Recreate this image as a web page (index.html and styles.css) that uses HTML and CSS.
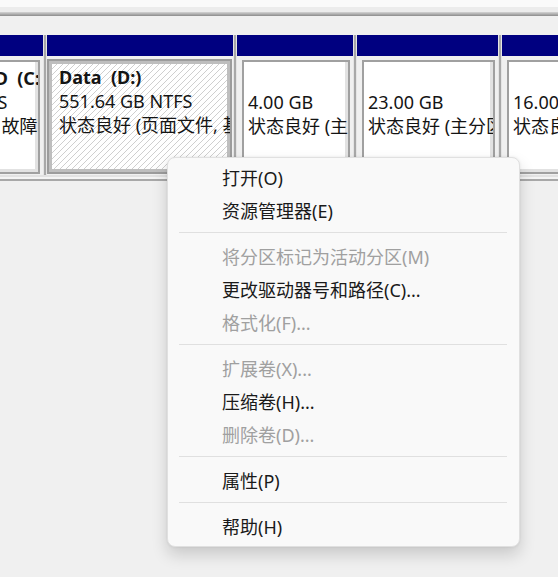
FILE: index.html
```html
<!DOCTYPE html>
<html lang="zh-CN">
<head>
<meta charset="utf-8">
<title>磁盘管理</title>
<link rel="stylesheet" href="styles.css">
</head>
<body>
<div class="screen">
  <div class="top">
    <div class="top-a"></div>
    <div class="top-b"></div>
    <div class="top-line"></div>
    <div class="top-c"></div>
  </div>
  <div class="row">
    <div class="col col-1">
      <div class="head"></div>
      <div class="box box-shift">
        <div class="lines">
          <div class="title">Windows 1 SSD&nbsp;&nbsp;(C:)</div>
          <div>200.00 GB NTFS</div>
          <div>状态良好 (启动, 故障转储, 基本数据分区)</div>
        </div>
      </div>
    </div>
    <div class="sep"></div>
    <div class="col col-2">
      <div class="head"></div>
      <div class="box selected">
        <div class="lines">
          <div class="title">Data&nbsp;&nbsp;(D:)</div>
          <div>551.64 GB NTFS</div>
          <div>状态良好 (页面文件, 基本数据分区)</div>
        </div>
      </div>
    </div>
    <div class="sep"></div>
    <div class="col col-3">
      <div class="head"></div>
      <div class="box">
        <div class="lines">
          <div class="title">&nbsp;</div>
          <div>4.00 GB</div>
          <div>状态良好 (主分区)</div>
        </div>
      </div>
    </div>
    <div class="sep"></div>
    <div class="col col-4">
      <div class="head"></div>
      <div class="box">
        <div class="lines">
          <div class="title">&nbsp;</div>
          <div>23.00 GB</div>
          <div>状态良好 (主分区)</div>
        </div>
      </div>
    </div>
    <div class="sep"></div>
    <div class="col col-5">
      <div class="head"></div>
      <div class="box">
        <div class="lines">
          <div class="title">&nbsp;</div>
          <div>16.00 GB</div>
          <div>状态良好 (主分区)</div>
        </div>
      </div>
    </div>
  </div>
  <div class="row-bottom"></div>

  <div class="menu">
    <div class="item">打开(O)</div>
    <div class="item">资源管理器(E)</div>
    <div class="menu-sep"></div>
    <div class="item disabled">将分区标记为活动分区(M)</div>
    <div class="item">更改驱动器号和路径(C)...</div>
    <div class="item disabled">格式化(F)...</div>
    <div class="menu-sep"></div>
    <div class="item disabled">扩展卷(X)...</div>
    <div class="item">压缩卷(H)...</div>
    <div class="item disabled">删除卷(D)...</div>
    <div class="menu-sep"></div>
    <div class="item">属性(P)</div>
    <div class="menu-sep"></div>
    <div class="item">帮助(H)</div>
  </div>
</div>
</body>
</html>
```

FILE: styles.css
```css
* { box-sizing: border-box; }

body {
  margin: 0;
  background: #f0f0f0;
  font-family: "Noto Sans", "Noto Sans CJK SC", sans-serif;
}

.screen {
  position: relative;
  width: 558px;
  height: 577px;
  overflow: hidden;
  background: #f0f0f0;
}

.top-a { height: 7px; background: #fafafa; }
.top-b { height: 5px; background: #ececec; }
.top-line { height: 4px; background: linear-gradient(#d4d4d4, #8c8c8c); }
.top-c { height: 19px; background: #f0f0f0; }

.row {
  display: flex;
  height: 140px;
}

.col {
  display: flex;
  flex-direction: column;
  overflow: hidden;
  flex-shrink: 0;
}

.col-1 { width: 43px; }
.col-2 { width: 186px; }
.col-3 { width: 116px; }
.col-4 { width: 141px; }
.col-5 { width: 140px; }

.sep {
  width: 4px;
  flex-shrink: 0;
  background: linear-gradient(to right, #e4e4e4 0 1px, #a8a8a8 1px 3px, #e4e4e4 3px);
}

.head {
  height: 21px;
  flex-shrink: 0;
  background: #000080;
}

.box {
  flex: 1;
  margin: 4px 3px 1px 5px;
  background: #ffffff;
  border: 2px solid #a0a0a0;
  box-shadow: inset -3px -3px 0 #e2e2e2;
  overflow: hidden;
}

.box-shift {
  margin-left: -132px;
}

.box.selected {
  margin: 3px 1px 1px 0;
  border: 2px solid #9c9c9c;
  background: repeating-linear-gradient(135deg, #ffffff 0 3px, #cfcfcf 3px 4.24px);
  box-shadow: inset 0 0 0 3px #bebebe;
}

.lines {
  padding: 4px 0 0 4px;
  font-size: 18px;
  line-height: 24px;
  color: #141414;
  white-space: nowrap;
}

.selected .lines {
  padding-left: 10px;
}

.title {
  font-weight: 700;
}

.row-bottom {
  height: 6px;
  background: linear-gradient(#e2e2e2 0 2px, #f4f4f4 2px 4px, #a8a8a8 4px 6px);
}

.menu {
  position: absolute;
  left: 167px;
  top: 157px;
  width: 353px;
  padding: 4px 0 2px;
  background: #f9f9f9;
  border: 1px solid #e0e0e0;
  border-radius: 8px;
  box-shadow: 0 8px 16px rgba(0, 0, 0, 0.16), 0 0 3px rgba(0, 0, 0, 0.08);
}

.item {
  height: 33px;
  line-height: 33px;
  padding-left: 54px;
  font-size: 18px;
  color: #1a1a1a;
  white-space: nowrap;
}

.item.disabled {
  color: #a0a0a0;
}

.menu-sep {
  height: 1px;
  margin: 4px 12px 8px 11px;
  background: #e0e0e0;
}
```
